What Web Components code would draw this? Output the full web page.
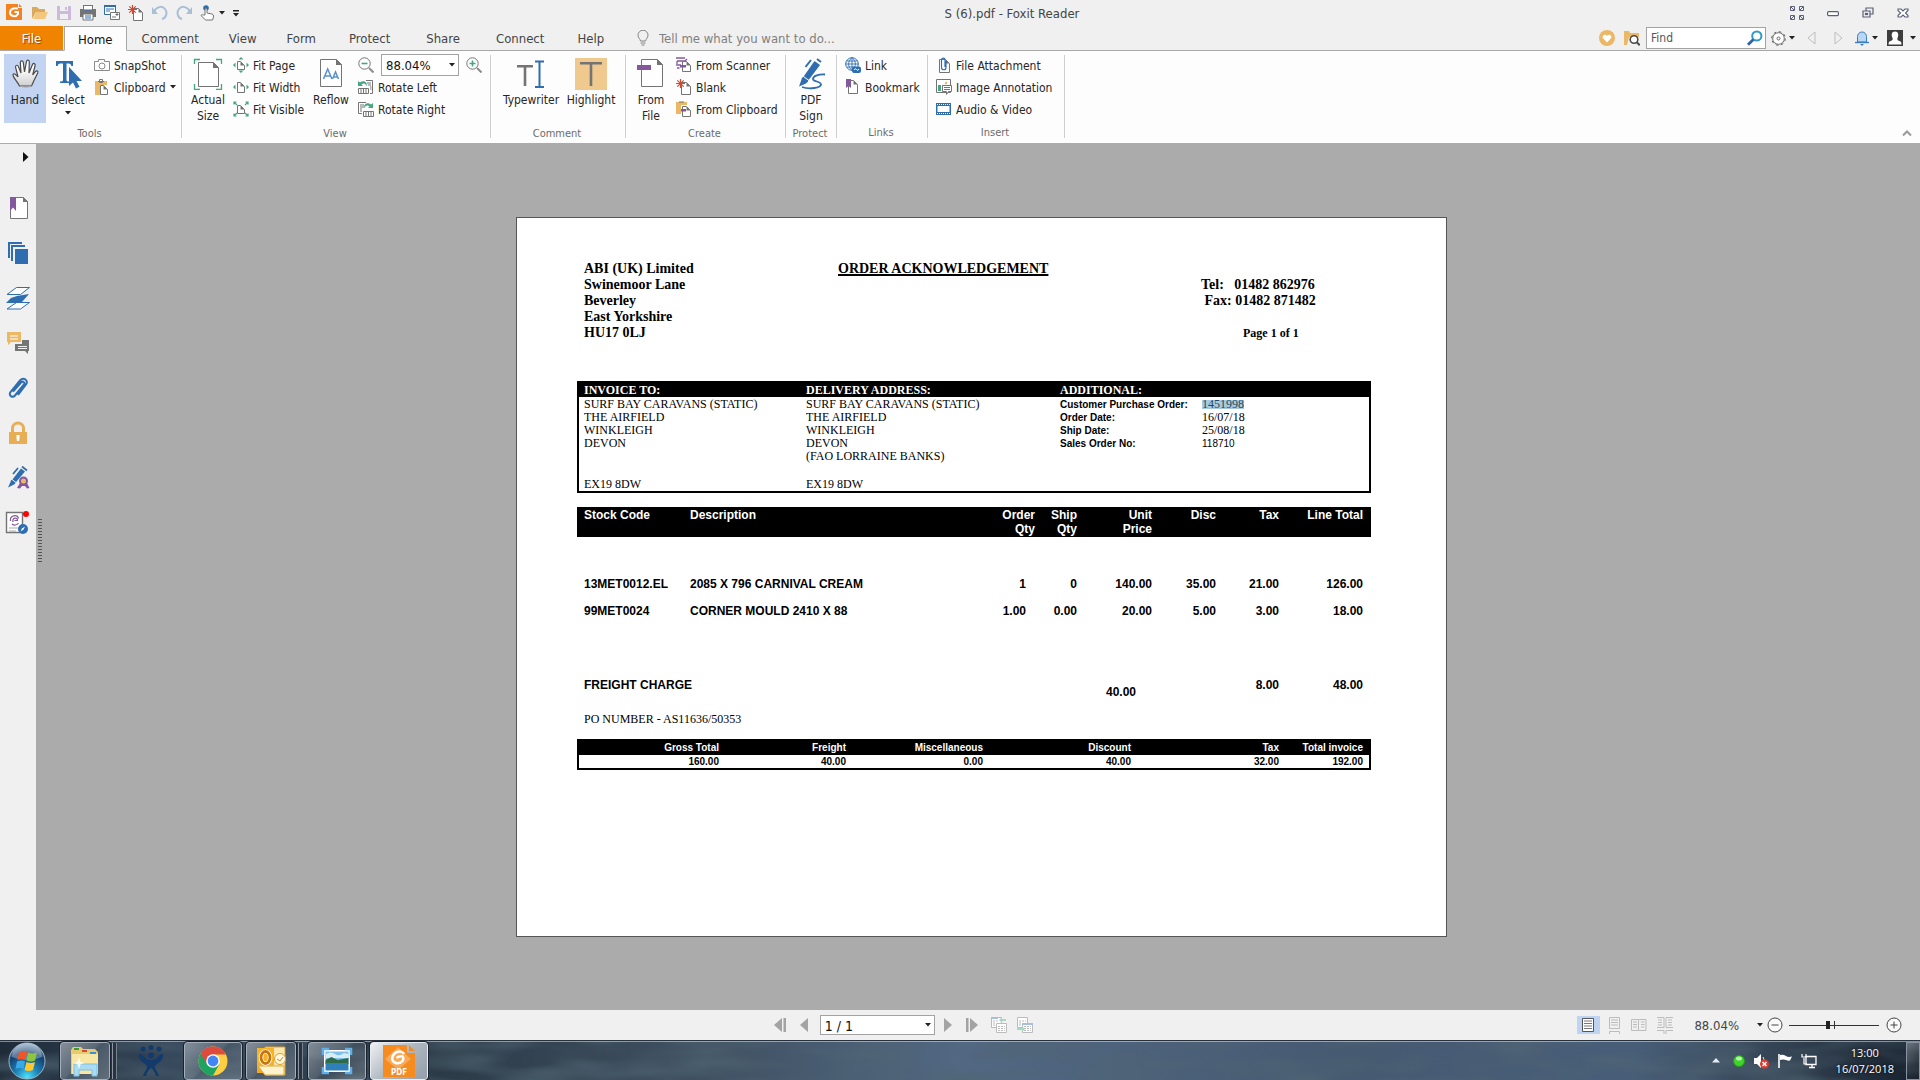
<!DOCTYPE html>
<html lang="en">
<head>
<meta charset="utf-8">
<title>S (6).pdf - Foxit Reader</title>
<style>
html,body{margin:0;height:100%}
body{font:12px/16px "DejaVu Sans Condensed","DejaVu Sans",sans-serif;color:#262626;background:#ababab;overflow:hidden}
</style>
</head>
<body>
<reader-app></reader-app>
<script>
const G='#747474',B='#2f6db1',P='#84589c',O='#ebb866',T='#45a681';
const page=(x,y,w,h,c=G,s=1)=>`<path d="M${x} ${y}h${w-4}l4 4v${h-4}h${-w}z" fill="#fff" stroke="${c}" stroke-width="${s}"/><path d="M${x+w-4} ${y}v4h4z" fill="${c}"/>`;
const ICONS={
logo:[18,18,`<path d="M0 0h12v4h4v12H0z" fill="#f58220"/><path d="M13 0l3 3h-3z" fill="#f58220"/><path d="M12 4.500c-5-1-8 1-8 4 0 4 6 5 8 1.500V8H8.500" fill="none" stroke="#fff" stroke-width="2"/>`],
open:[16,16,`<path d="M0 14V2h5l2 2h6v3H4z" fill="#dca95c"/><path d="M1 14L4 7h12l-3 7z" fill="#f3c77d"/>`],
save:[16,16,`<path d="M1 1h14v14H1z" fill="#cdb9dc"/><path d="M4 1h8v5H4zM4 9h8v5H4z" fill="#f0f0f0"/><path d="M9 2h2v3H9z" fill="#cdb9dc"/>`],
print:[16,16,`<path d="M3 0h10v4H3zM0 4h16v8H0z" fill="#747474"/><path d="M4 1h8v4H4z" fill="#fff"/><path d="M3 9h10v6H3z" fill="#fff" stroke="#747474"/><path d="M5 11h6M5 13h6" stroke="${B}"/><path d="M4 5h8" stroke="${B}"/>`],
mail:[16,16,`<path d="M.5.500h11v9H.5z" fill="#fff" stroke="${B}"/><path d="M0 0h12v2H0z" fill="${B}"/><path d="M2 4h8M2 6h4" stroke="${B}"/><path d="M6.500 7.500h9v7h-9z" fill="#fff" stroke="#747474"/><path d="M8 12h4M12 9h2v1h-2z" stroke="#747474"/>`],
newdoc:[16,16,page(5.5,3.5,9,12,G,1)+`<path d="M4.500 0v9M0 4.500h9M1.300 1.300l6.400 6.400M7.700 1.300L1.300 7.700" stroke="#d8452e" stroke-width="1.200"/>`],
undo:[16,16,`<path d="M2 7C4 2 10 0 13 4s1 9-3 10" fill="none" stroke="#a9bfd9" stroke-width="2"/><path d="M0 2v7h6z" fill="#a9bfd9"/>`],
redo:[16,16,`<path d="M14 7C12 2 6 0 3 4s-1 9 3 10" fill="none" stroke="#a9bfd9" stroke-width="2"/><path d="M16 2v7h-6z" fill="#a9bfd9"/>`],
touch:[16,16,`<circle cx="6" cy="3" r="2.800" fill="${B}"/><path d="M5 10V4q1-1.500 2 0v4l5 1q2 .5 1.500 3l-1 3H5.500L1 10.500q1-1.500 2.500-.5z" fill="#fff" stroke="#747474"/>`],
down:[6,4,`<path d="M0 0h6L3 3.500z" fill="#222"/>`],
qmore:[6,7,`<path d="M0 0h6v1.500H0zM0 3h6L3 6.500z" fill="#222"/>`],
full:[14,14,`<g fill="none" stroke="#5b5f78" stroke-width="1"><path d="M.5 4.500v-4h4v4zM9.500 4.500v-4h4v4zM.5 13.500v-4h4v4zM9.500 13.500v-4h4v4z"/><path d="M1 1l3 3M13 1l-3 3M1 13l3-3M13 13l-3-3"/></g>`],
min:[12,14,`<rect x=".6" y="5.600" width="10.800" height="4" rx="1" fill="#fff" stroke="#5b5f78" stroke-width="1.200"/>`],
restore:[12,14,`<g fill="#f0f0f0" stroke="#5b5f78" stroke-width="1.200"><path d="M4 2h7v6H4z"/><path d="M1 5h7v6H1z"/><path d="M3.500 7.500h2v1h-2z"/></g>`],
close:[12,14,`<path d="M1 3h3l2 2 2-2h3v1.500L8.500 7 11 9.500V11H8L6 9l-2 2H1V9.500L3.500 7 1 4.500z" fill="#fff" stroke="#5b5f78" stroke-width="1.100"/>`],
bulb:[12,16,`<path d="M3.500 11C3 8.500 1 8 1 5.200a5 5 0 0 1 10 0C11 8 9 8.500 8.500 11z" fill="none" stroke="#848484"/><path d="M3.500 13h5M4.500 15h3" stroke="#848484"/>`],
heart:[16,16,`<circle cx="8" cy="8" r="8" fill="${O}"/><path d="M8 12.500L4 8.300C2.500 6 5.500 3 8 5.800 10.500 3 13.500 6 12 8.300z" fill="#fff"/>`],
fsearch:[16,16,`<path d="M0 15V1h5l1 2h9v4H5l-2 8z" fill="${O}"/><circle cx="10" cy="9.500" r="3.800" fill="#fff" stroke="#4a4a4a" stroke-width="1.600"/><path d="M12.700 12.200l3 3" stroke="#4a4a4a" stroke-width="2"/>`],
find:[16,16,`<circle cx="9.800" cy="6" r="4.600" fill="#fff" stroke="#2f9ac4" stroke-width="2"/><path d="M6.300 9.500L1 14.700" stroke="#2f5fa8" stroke-width="2.800"/>`],
gear:[15,15,`<circle cx="7.500" cy="7.500" r="5.800" fill="#fff" stroke="#666" stroke-width="1"/><circle cx="7.500" cy="7.500" r="6.800" fill="none" stroke="#666" stroke-width="1" stroke-dasharray="2.700 2.640"/><circle cx="7.500" cy="7.500" r="1.500" fill="none" stroke="#666"/>`],
tl:[9,14,`<path d="M8 1v12L1 7z" fill="none" stroke="#bdbdbd"/>`],
tr:[9,14,`<path d="M1 1v12l7-6z" fill="none" stroke="#bdbdbd"/>`],
bell:[14,16,`<path d="M2.500 12V6.500a4.500 4.500 0 0 1 9 0V12z" fill="#b9d7f5" stroke="#3b7ec2"/><path d="M0 12.500h14" stroke="#3b7ec2" stroke-width="1.400"/><path d="M5 14h4l-2 2z" fill="#3b7ec2"/>`],
user:[20,16,`<path d="M0 0h16v16H0z" fill="#3d3d3d"/><path d="M8 1.500c3.500 0 4 3.500 2.500 6.500-.7 2 .5 2.500 3 3.500q1 .5 1 3H1.500q0-2.500 1-3c2.500-1 3.700-1.500 3-3.500C4 5 4.500 1.500 8 1.500z" fill="#fff"/>`],
up:[10,6,`<path d="M1 5.500L5 1.500l4 4" fill="none" stroke="#999" stroke-width="2"/>`],
hand:[32,32,`<path d="M10.500 28C8 23 3.500 19 4 16.500c1-1.800 3 0 5 2.500L6.500 9c0-2.200 2.300-2.400 3-.3L12 15 11.300 4.500c.2-2.200 2.700-2.200 3 0L15.500 14 17.500 3.500c.5-2 2.800-1.800 2.800.3L20 15l3.500-8.500c1-1.800 3-1 2.600 1L23.700 17l2.800-3.500c1.300-1.300 3-.3 2.200 1.500L25 22.500 22.500 28z" fill="url(#hg)" stroke="#4a4a4a" stroke-width="1.200"/><path d="M11 28c4 1.500 8 1.500 11.500 0" stroke="#aaa" fill="none"/><defs><linearGradient id="hg" x2="0" y2="1"><stop offset=".3" stop-color="#fff"/><stop offset="1" stop-color="#cfcfcf"/></linearGradient></defs>`],
select:[32,32,`<path d="M4 3h17v5h-1.500q-.5-2.500-2.500-2.500h-2.500V22q0 1.500 3 1.500V25H8v-1.500q3 0 3-1.500V5.500H8Q6 5.500 5.500 8H4z" fill="${B}"/><path d="M17 9v19l4-3.500 3 6 3.500-1.700-3-5.800H30z" fill="${B}"/>`],
camera:[16,16,`<path d="M.5 4.500h4v-2h6v2h5v9H.5z" fill="none" stroke="#8a8a8a"/><circle cx="8" cy="9" r="3" fill="none" stroke="#8a8a8a"/>`],
clip:[16,16,`<path d="M1 2h12v4H6v10H1z" fill="${O}"/><path d="M4 2.500h6M5.500.500h3v3h-3z" fill="#fff" stroke="${G}"/>${page(6.500,6.500,7,9)}`],
actual:[32,32,`<path d="M2.500 6V1.500H8M24 1.500h5.500V6M2.500 26v5.500H8M24 31.500h5.500V26" fill="none" stroke="${T}" stroke-width="1.300"/><path d="M6.500 4.500h15l5 5v19h-20z" fill="#fff" stroke="${G}"/><path d="M21 4v6h6z" fill="${G}"/>`],
fpage:[16,16,page(4.5,4.5,7,8)+`<path d="M8 0l2.500 2.500h-5zM8 16l2.500-2.500h-5zM0 8l2.500-2.500v5zM16 8l-2.500-2.500v5z" fill="${T}"/>`],
fwidth:[16,16,page(4.5,3.5,7,10)+`<path d="M0 8l2.500-2.500v5zM16 8l-2.500-2.500v5z" fill="${T}"/>`],
fvis:[16,16,page(4.5,4.5,7,8)+`<path d="M1 1l3 3M15 1l-3 3M1 15l3-3M15 15l-3-3M1 3.500V1h2.500M12.500 1H15v2.500M1 12.500V15h2.500M12.500 15H15v-2.500" fill="none" stroke="${T}" stroke-width="1.200"/>`],
reflow:[32,32,`<path d="M5.500 1.500h16l5 5v22h-21z" fill="#fff" stroke="${G}"/><path d="M21 1v6h6z" fill="${G}"/><path d="M8.500 21l4.200-10 4.200 10M10 18h5.500M17.500 21l3-7 3 7M18.500 19h4" fill="none" stroke="#5b91cc" stroke-width="1.500"/>`],
zout:[16,16,`<circle cx="6.500" cy="6.500" r="5.700" fill="#fff" stroke="${G}"/><path d="M3.500 6.500h6" stroke="${T}" stroke-width="1.600"/><path d="M11 11l4.500 4.500" stroke="#8c8c8c" stroke-width="2"/>`],
zin:[16,16,`<circle cx="6.500" cy="6.500" r="5.700" fill="#fff" stroke="${G}"/><path d="M3.500 6.500h6M6.500 3.500v6" stroke="${T}" stroke-width="1.600"/><path d="M11 11l4.500 4.500" stroke="#8c8c8c" stroke-width="2"/>`],
rotl:[16,16,`<path d="M8 1.500h6.500v13H12" fill="none" stroke="${G}"/><path d="M9 4h4M10 6h3M12 8h1.500M12 10h1.500" stroke="${G}"/><path d="M.5 9.500h10v5H.5zM3 10v4M5.500 10v4M8 10v4" fill="#fff" stroke="${G}"/><path d="M0 2v5h5L3.500 5.500C6 3.500 8 5 8.500 7.500 10 3 5.500.500 2 3.500z" fill="${T}"/>`],
rotr:[16,16,`<path d="M8 1.500H.5v11H4" fill="none" stroke="${G}"/><path d="M2 4h4M2 6h4M2 8h2M2 10h2" stroke="${G}"/><path d="M5.500 10.500h10v5h-10zM8 11v4M10.500 11v4M13 11v4" fill="#fff" stroke="${G}"/><path d="M15 2v5h-5l1.500-1.500C9 3.500 7 5 6.500 7.500 5 3 9.500.500 13 3.500z" fill="${T}"/>`],
typew:[32,32,`<path d="M2 7h16v2.500h-6.700V28H8.700V9.500H2z" fill="${G}"/><path d="M20 3.500h9M20 29h9M24.500 3.500V29" stroke="${B}" stroke-width="2" fill="none"/>`],
high:[32,32,`<path d="M0 0h32v32H0z" fill="#efc98e"/><path d="M5 4h22v2.500h-9.700V28h-2.600V6.500H5z" fill="${G}"/>`],
ffile:[32,32,`<path d="M6.500 1.500h16l5 5v22h-21z" fill="#fff" stroke="${G}"/><path d="M22 1v6h6z" fill="${G}"/><path d="M2 7h14v5H2z" fill="${P}"/>`],
fscan:[16,16,`<path d="M0 1h9M1 4h8l2-2M0 8h5M1 4v3M3.500 11H1" stroke="${P}" stroke-width="1.300" fill="none"/>${page(6.5,4.5,8,10)}<path d="M4 8h6v2.500H4z" fill="${P}"/>`],
fclip:[16,16,`<path d="M0 1h11v3H5v9H0z" fill="${O}"/><path d="M3 1h5" stroke="${G}"/>${page(6.5,5.5,8,10)}<path d="M5 8h5v2.500H5z" fill="${P}"/>`],
sign:[32,32,`<path d="M19.500 3l5.500 4L11 25.500l-7 3 2.500-7z" fill="${B}"/><path d="M16 2l-5.500 7M22 1l4 3M7 20l5.500 4" stroke="${B}" stroke-width="2"/><path d="M8.500 18.500l5.500 4" stroke="#fff"/><path d="M30 16.500c-6-.5-12 1.500-12 4.500s8 2 8 5.500-12 5-19 2.500" fill="none" stroke="${B}" stroke-width="1.800"/>`],
link:[16,16,`<circle cx="7" cy="7" r="6.300" fill="#fff" stroke="${B}"/><path d="M7 .5c-4.500 4-4.500 9 0 13M7 .5c4.500 4 4.500 9 0 13M.5 7h13M1.500 4h11M2 10h8M7 1v12" stroke="${B}" fill="none" stroke-width=".9"/><rect x="7" y="9.500" width="9" height="6.500" rx="2" fill="${B}"/><path d="M9 13q1-2.500 2.500-.5T14 12" stroke="#fff" fill="none"/>`],
bookm:[16,16,page(3.5,1.5,9,13)+`<path d="M1 0h5v9L3.500 7 1 9z" fill="${P}"/>`],
attach:[16,16,page(3.5,2.5,10,13)+`<path d="M10 4v6.500c0 3-4.500 3-4.500 0V3c0-2.500 3.500-2.500 3.500 0v7" fill="none" stroke="${B}" stroke-width="1.200"/>`],
imgann:[16,16,`<path d="M.5.500h14v13H.5z" fill="#fff" stroke="${G}"/><path d="M2 6h3v6H2z" fill="${T}"/><circle cx="10" cy="4" r="1.200" fill="${O}"/><path d="M6.500 6.500h9v6h-3l-2 3v-3h-4z" fill="#fff" stroke="${G}"/><path d="M8 8.500h6M8 10.500h6" stroke="${G}"/>`],
video:[16,16,`<path d="M0 2h15v12H0z" fill="${B}"/><path d="M1.500 5h12v6h-12z" fill="#fff"/><path d="M1 3.500h13M1 12.500h13" stroke="#fff" stroke-dasharray="1 1"/>`],
sarrow:[6,10,`<path d="M0 0v10l5.500-5z" fill="#111"/>`],
sbook:[24,24,`<path d="M4.500 1.500h13l4 4v17h-17z" fill="#fff" stroke="${G}"/><path d="M17 1v5h5z" fill="${G}"/><path d="M4 1h6v14l-3-3.500L4 15z" fill="${P}"/>`],
spages:[24,24,`<path d="M3 17V2h13" fill="none" stroke="${B}" stroke-width="2"/><path d="M6 20V5h13" fill="none" stroke="${B}" stroke-width="2"/><path d="M9 8h13v15H9z" fill="${B}"/>`],
slayers:[24,24,`<path d="M10.500 1.500h13l-9 7H1z" fill="#fff" stroke="${B}"/><path d="M10.500 16.500h13l-9 6.500H1z" fill="#fff" stroke="${B}"/><path d="M11 10l12-2-8 9H0l5-5z" fill="${B}"/>`],
scomm:[24,24,`<path d="M1 1h14v10H5l-3 3v-3H1z" fill="${O}"/><path d="M4 5h8M4 8h8" stroke="#fff" stroke-width="1.200"/><path d="M9 13h7V9h7v11h-1v3l-3-3H9z" fill="${G}"/><path d="M12 15.500h9M12 17.500h9" stroke="#f0f0f0"/>`],
sclip:[24,24,`<path d="M7 15.500l8-9c1.700-2 4.500 0 3 2L9 19.500c-2.500 3-7-.2-4.500-3.500L14 4.500c3.500-4 9 0 6 4L12 19" fill="none" stroke="${B}" stroke-width="2"/>`],
slock:[24,24,`<path d="M6.500 12V7.500a5.500 5.500 0 0 1 11 0V12" fill="none" stroke="#e8ae55" stroke-width="3"/><path d="M3 11h18v12H3z" fill="#e8ae55"/><path d="M10.500 14h3v3l-.5 3h-2l-.5-3z" fill="#fff"/>`],
ssign:[24,24,`<path d="M15 2.500l4 3L8 18.500l-6 3L4.500 16z" fill="${B}"/><path d="M12 2L7 8M16 .5l5 4M5 14.500l4 3" stroke="${B}" stroke-width="1.800"/><path d="M6 13.500l4 3" stroke="#f0f0f0"/><path d="M14 17l-3 5 3 .5 2-2.500h3l2 2.500 2.500-.5-2.500-5z" fill="${P}"/><circle cx="17.500" cy="15" r="3.500" fill="${O}" stroke="${P}" stroke-width="2"/>`],
scert:[26,24,`<path d="M1.500 1.500h16v20h-16z" fill="#fff" stroke="${G}" stroke-width="1.400"/><path d="M5.500 10c-1-6 7-7 8-2.500M8 11c-1-5 4.500-5 4.500-1.500h-3M7 13c2 2 5 1 6.500-1" fill="none" stroke="${P}" stroke-width="1.200"/><path d="M4 17h9M4 20h7" stroke="#aaa"/><circle cx="18" cy="18" r="5" fill="${B}"/><path d="M15.500 20.500l1.500-3 3-2-1.500 3z" fill="#fff"/><circle cx="21" cy="3" r="3" fill="#f00"/>`],
first:[13,14,`<path d="M8 0v14L0 7z" fill="#a3a3a3"/><path d="M9.500 0h2.500v14H9.500z" fill="#a3a3a3"/>`],
prev:[8,14,`<path d="M8 0v14L0 7z" fill="#a3a3a3"/>`],
next:[8,14,`<path d="M0 0v14l8-7z" fill="#a3a3a3"/>`],
last:[13,14,`<path d="M5 0v14l8-7z" fill="#a3a3a3"/><path d="M1 0h2.500v14H1z" fill="#a3a3a3"/>`],
vprev:[16,16,`<g fill="#fff" stroke="#bcbcbc"><path d="M.5.500h10v10H.5z"/><path d="M2 4h5M2 6h3M2 8h3" stroke-dasharray="2 1"/><path d="M5.500 6.500h10v9h-10z"/><path d="M7 9.500h7M7 11.500h7M7 13.500h7" stroke-dasharray="2 1"/></g><path d="M0 0h7v2H0z" fill="#a7bede"/><path d="M8 3l3-3v2h4v2h-4v2z" fill="#a9d6c5"/>`],
vnext:[16,16,`<g fill="#fff" stroke="#bcbcbc"><path d="M.5.500h10v10H.5z"/><path d="M2 4h7M2 6h3M2 8h3" stroke-dasharray="2 1"/><path d="M5.500 6.500h10v9h-10z"/><path d="M7 9.500h7M7 11.500h7M7 13.500h7" stroke-dasharray="2 1"/></g><path d="M5 6h11v2H5z" fill="#a7bede"/><path d="M8 12l-3-3v2H0v2h5v2z" fill="#a9d6c5"/>`],
v1:[23,18,`<path d="M0 0h23v18H0z" fill="#bfd3f2"/><path d="M5.500 2.500h11v13h-11z" fill="#fff" stroke="#555"/><path d="M7 5h8M7 7.500h8M7 10h8M7 12.500h8" stroke="#777"/>`],
v2:[12,18,`<g fill="none" stroke="#bcbcbc"><path d="M.5 1.500h10v11H.5zM.5 18v-2.500h10V18M2 4h7M2 6.500h7M2 9h7"/></g>`],
v3:[16,18,`<g fill="none" stroke="#bcbcbc"><path d="M.5 3.500h7v11h-7zM8 3.500h7v11H8M2 6h4M2 8.500h4M2 11h4M10 6h3.500M10 8.500h3.500M10 11h3.500"/></g>`],
v4:[16,18,`<g fill="none" stroke="#bcbcbc"><path d="M0 1.500h7v10H0M16 1.500H9v10h7M0 14.500h7V18M16 14.500H9V18M1 4h4M1 6.500h4M1 9h4M11 4h4M11 6.500h4M11 9h4"/></g>`],
minus:[16,16,`<circle cx="8" cy="8" r="7" fill="#fafafa" stroke="#444"/><path d="M4.500 8h7" stroke="#444"/>`],
plus:[16,16,`<circle cx="8" cy="8" r="7" fill="#fafafa" stroke="#444"/><path d="M4.500 8h7M8 4.500v7" stroke="#444"/>`],
orb:[38,38,`<defs><radialGradient id="o1" cx=".5" cy=".95" r=".9"><stop offset="0" stop-color="#4fe3ff"/><stop offset=".35" stop-color="#1e86b8"/><stop offset=".75" stop-color="#153f6e"/><stop offset="1" stop-color="#7f9db8"/></radialGradient></defs><circle cx="19" cy="19" r="18" fill="url(#o1)" stroke="#9ab4c8"/><path d="M4 15a15 14 0 0 1 30 0q-15 6-30 0z" fill="#fff" opacity=".3"/><path d="M11 10q4-2 8 0l-1.500 8q-4-2-8 0z" fill="#f0562a"/><path d="M20 10.500q4 2 9 0L27 18.500q-4 2-8.500 0z" fill="#8cc63f"/><path d="M9 19.500q4-2 8 0L15.500 27q-4-2-8 0z" fill="#38a9e8"/><path d="M18.500 20q4 2 8.500 0l-2 8q-4 2-8.500 0z" fill="#fdc82f"/>`],
explorer:[32,32,`<path d="M2 5l2-3h8l2 2h12l3 3v22H2z" fill="#e8cb6f"/><path d="M3 9h26v20H3z" fill="#f8e7a4"/><path d="M5 3h5v2H5z" fill="#3a9b3a"/><path d="M13 5h5v2h-5z" fill="#d24a32"/><path d="M21 7h6v2h-6z" fill="#3a8fd8"/><path d="M5 31V19h23v12h-5v-6H10v6z" fill="#a9dcf2" stroke="#7dbfdf"/><path d="M10 12l1.500 5 4 1-4 1.500L10 24l-1.500-4.500-4-1.500 4-1z" fill="#fff" opacity=".8"/>`],
jira:[32,32,`<g fill="#123a6b"><circle cx="8" cy="4" r="2.500"/><circle cx="16" cy="2.500" r="2.500"/><circle cx="24" cy="4" r="2.500"/><circle cx="16" cy="10.500" r="3"/><path d="M4 9c4-1 6 6 12 6s8-7 12-6c1 7-6 9-8 12-1 2 3 6 4 10h-3c-1-4-3-7-5-8-2 1-4 4-5 8H8c1-4 5-8 4-10-2-3-9-5-8-12z"/></g>`],
chrome:[32,32,`<circle cx="16" cy="16" r="14.500" fill="#ffcd41"/><path d="M16 16L3.500 8.700A14.500 14.500 0 0 0 16 30.500l6.500-11.500z" fill="#1da462"/><path d="M16 9.500h13A14.500 14.500 0 0 0 3.500 8.700L10 19z" fill="#dd4b3e"/><circle cx="16" cy="16" r="6.800" fill="#fff"/><circle cx="16" cy="16" r="5.400" fill="#4285f4"/>`],
outlook:[32,32,`<path d="M10 2h20v28H10z" fill="#fbe7ad" stroke="#d9a02c"/><path d="M2 4h16v24l-5 3-2-3H2z" fill="#f3a81d"/><path d="M3 21h26v9H10z" fill="#fff3cf" stroke="#dda93c"/><path d="M2 3h17v18H2z" fill="#f6b221"/><ellipse cx="10.500" cy="12.500" rx="4.500" ry="6" fill="none" stroke="#fff" stroke-width="4.500"/><ellipse cx="10.500" cy="12.500" rx="4.500" ry="6" fill="none" stroke="#c9740d" stroke-width="2.800"/><circle cx="25" cy="14" r="5.500" fill="#fff7e0" stroke="#d9a02c"/><path d="M22 14l3 2 3-4" fill="none" stroke="#c98a1c"/>`],
photo:[32,32,`<path d="M3 5h26v22H3z" fill="#fff"/><path d="M4.500 6.500h23V19h-23z" fill="#7fc0ec"/><path d="M5 9q5-3 9 0t9-1l4 1v4H5z" fill="#d8ecf8"/><path d="M4.500 15l6-3 6 3 11-2v6h-23z" fill="#2f6b46"/><path d="M4.500 18h23v7.500h-23z" fill="#2f7fb8"/><path d="M2 10V4h6M24 4h6v6M2 22v6h6M24 28h6v-6" fill="none" stroke="#5fb0e8" stroke-width="2.500"/>`],
foxit:[34,34,`<path d="M1 1h24v8h8v24H1z" fill="#f68b1f"/><path d="M27 1l6 6h-6z" fill="#f68b1f"/><path d="M16 3l13 12-13 11L3 15z" fill="#f9a95a"/><path d="M22 10c-1-2-4-3-7-2-4 1.500-6 6-4 9s7 3 9.500 0c1-1.500 1-4 0-4.500-2-.5-4 0-6 1.500" fill="none" stroke="#fff" stroke-width="2.600"/>`],
tarr:[8,5,`<path d="M4 0l4 4.500H0z" fill="#e6ecf4"/>`],
green:[12,12,`<circle cx="6" cy="6" r="5.500" fill="#3fd32b" stroke="#279a1c"/><ellipse cx="6" cy="3.500" rx="3" ry="2" fill="#b6f5a8"/>`],
speaker:[16,16,`<path d="M1 5h3l4-4v14l-4-4H1z" fill="#fff"/><path d="M10 4q3 4 0 8" stroke="#ddd" fill="none"/><circle cx="11.500" cy="11" r="4.500" fill="#e03a2c"/><path d="M9.500 9l4 4m0-4l-4 4" stroke="#fff" stroke-width="1.500"/>`],
flag:[16,16,`<path d="M2 1v14" stroke="#fff" stroke-width="1.600"/><path d="M3 2q3-1 6 1 2 1.500 6 .5l-2 4q-2 .5-4-.5-3-1-6 0z" fill="#fff"/>`],
net:[16,16,`<path d="M5 3.500h10v8H5zM8 14.500h6M11 12v2" fill="#3b4a5c" stroke="#fff" stroke-width="1.300"/><path d="M1 1v3h4V1M3 5v6h3" fill="none" stroke="#fff" stroke-width="1.200"/>`]
};
function define(name,css,html,setup){
  const t=document.createElement('template');
  t.innerHTML=`<style>*{box-sizing:border-box}button,input,select{font:inherit;color:inherit;margin:0}button{border:0;background:none;padding:0}${css}</style>${html}`;
  customElements.define(name,class extends HTMLElement{
    connectedCallback(){
      if(this.shadowRoot)return;
      const r=this.attachShadow({mode:'open'});
      r.append(t.content.cloneNode(true));
      if(setup)setup(r,this);
    }
  });
}
const icon=(n,c='')=>`<ui-icon class="${c}" name="${n}"></ui-icon>`;
define('ui-icon',':host{display:inline-flex;flex:none}svg{display:block}','',(r,h)=>{
  const [w,H,s]=ICONS[h.getAttribute('name')];
  r.innerHTML+=`<svg width="${w}" height="${H}" viewBox="0 0 ${w} ${H}" aria-hidden="true">${s}</svg>`;
});
define('icon-button',':host{display:inline-flex}button{display:flex;align-items:center;gap:3px}','<button></button>',(r,h)=>{
  const b=r.querySelector('button');
  b.setAttribute('aria-label',h.getAttribute('label'));
  b.innerHTML=icon(h.getAttribute('icon'))+(h.hasAttribute('menu')?icon('down'):'');
});

define('title-bar',`:host{display:flex;height:26px;align-items:center;background:#f0f0f0}
nav{display:flex;gap:8px;width:240px;padding-left:6px;align-items:center}h1{flex:1;text-align:center;font-size:13px;font-weight:400;margin:0;padding-top:2px;color:#444}
div{display:flex;width:136px;gap:23px;padding-left:6px;align-items:center}`,
`<nav><icon-button icon="logo" label="Foxit"></icon-button><icon-button icon="open" label="Open"></icon-button><icon-button icon="save" label="Save"></icon-button><icon-button icon="print" label="Print"></icon-button><icon-button icon="mail" label="Email"></icon-button><icon-button icon="newdoc" label="New"></icon-button><icon-button icon="undo" label="Undo"></icon-button><icon-button icon="redo" label="Redo"></icon-button><icon-button icon="touch" label="Touch mode" menu></icon-button><icon-button icon="qmore" label="Customize"></icon-button></nav>
<h1><slot></slot></h1>
<div><icon-button icon="full" label="Full screen"></icon-button><icon-button icon="min" label="Minimize"></icon-button><icon-button icon="restore" label="Restore"></icon-button><icon-button icon="close" label="Close"></icon-button></div>`);

define('ribbon-tab',`:host{display:flex;--pad:15px}:host([wide]){--pad:18px}
button{font-size:13px;padding:2px var(--pad) 0;color:#444;height:25px;border-bottom:1px solid #a8a8a8}
:host([kind=file]) button{width:63px;background:#f08300;color:#fff;text-shadow:1px 1px 1px #8a4a00}
:host([kind=active]){--pad:13px;margin-left:1px}
:host([kind=active]) button{background:#fdfdfd;border:1px solid #a8a8a8;border-bottom-color:#fdfdfd;color:#111}`,'<button role="tab"><slot></slot></button>');
define('ribbon-tabs',`:host{display:flex;height:25px;background:linear-gradient(#a8a8a8,#a8a8a8) 0 24px/100% 1px no-repeat #f0f0f0}
.tell{display:flex;align-items:center;gap:10px;padding-left:18px;flex:1;height:24px}
input{border:0;background:none;padding:0;outline:0}.tell input{width:240px;font-size:13px;padding-top:2px}input::placeholder{color:#808080;opacity:1}
.tools{display:flex;align-items:center;height:24px;padding-right:4px}
.tools>*{margin-right:9px}.tools .gap{margin-right:12px}.tools .near{margin-right:6px}
.tools .tri{margin-right:18px}.tools .tri2{margin-right:12px}.tools .end{margin:0}
.find{display:flex;align-items:center;width:120px;height:22px;border:1px solid #a3a3a3;background:#fff;padding:0 2px 0 4px;margin-right:5px}.find input{flex:1;width:60px}
.find ui-icon{margin-left:auto}.find input::placeholder{color:#555}`,
`<ribbon-tab kind="file">File</ribbon-tab><ribbon-tab kind="active">Home</ribbon-tab><ribbon-tab>Comment</ribbon-tab><ribbon-tab>View</ribbon-tab><ribbon-tab>Form</ribbon-tab><ribbon-tab wide>Protect</ribbon-tab><ribbon-tab wide>Share</ribbon-tab><ribbon-tab wide>Connect</ribbon-tab><ribbon-tab>Help</ribbon-tab>
<label class="tell"><ui-icon name="bulb"></ui-icon><input aria-label="Tell me" placeholder="Tell me what you want to do..."></label>
<div class="tools"><icon-button icon="heart" label="Favourite"></icon-button><icon-button class="near" icon="fsearch" label="Search folder"></icon-button>
<label class="find"><input aria-label="Find" placeholder="Find"><ui-icon name="find"></ui-icon></label>
<icon-button class="gap" icon="gear" label="Settings" menu></icon-button><icon-button class="tri" icon="tl" label="Previous"></icon-button><icon-button class="tri2" icon="tr" label="Next"></icon-button><icon-button icon="bell" label="Notices" menu></icon-button><icon-button class="end" icon="user" label="Account" menu></icon-button></div>`);

define('big-button',`:host{display:flex;width:42px}:host([mid]){width:44px}:host([wide]){width:64px}:host([semi]){width:56px}
button{width:100%;height:69px;padding-top:4px;display:flex;flex-direction:column;align-items:center;line-height:16px}
:host([on]) button{background:#c2d4f2}span{margin-top:2px}.arrow{margin-top:3px}`,
`<button><span><slot></slot></span></button>`,(r,h)=>{
  const b=r.querySelector('button');
  b.insertAdjacentHTML('afterbegin',icon(h.getAttribute('icon')));
  if(h.hasAttribute('menu'))b.insertAdjacentHTML('beforeend',icon('down','arrow'));
});
define('row-button',`:host{display:flex}button{display:flex;align-items:center;gap:4px;height:22px;white-space:nowrap}span{padding-top:2px}`,
`<button><span><slot></slot></span></button>`,(r,h)=>{
  const b=r.querySelector('button');
  b.insertAdjacentHTML('afterbegin',icon(h.getAttribute('icon')));
  if(h.hasAttribute('menu'))b.insertAdjacentHTML('beforeend',icon('down'));
});
define('drop-box',`:host{display:grid;width:78px;height:22px;border:1px solid #a3a3a3;background:#fff;align-items:center;font-size:13px;color:#111}
select{grid-area:1/1;appearance:none;border:0;background:none;padding:1px 0 0 4px;width:100%;outline:0}ui-icon{grid-area:1/1;justify-self:end;margin-right:3px;pointer-events:none}`,
`<select></select><ui-icon name="down"></ui-icon>`,(r,h)=>{
  const s=r.querySelector('select');s.setAttribute('aria-label',h.getAttribute('label'));s.add(new Option(h.getAttribute('value')));
});
define('ribbon-group',`:host{display:flex;flex-direction:column;flex:none;width:var(--w);background:linear-gradient(#cfcfcf,#cfcfcf) right 0 top 4px/1px 83px no-repeat}
.body{display:flex;padding:3px 0 0 var(--p,4px);height:72px}footer{text-align:center;font-size:11px;line-height:20px;padding:1px 3px 0 0;color:#6b6b6b}`,
`<div class="body"><slot></slot></div><footer></footer>`,(r,h)=>{r.querySelector('footer').textContent=h.getAttribute('label')});
define('ribbon-bar',`:host{display:flex;height:93px;background:#fdfdfd;border-bottom:1px solid #ababab}
.col{margin-left:4px}.fit{width:77px}.zoom{display:flex;gap:7px;align-items:center;height:22px}.far{margin-left:6px}.first{margin-left:0}
icon-button.up{margin:auto 8px 7px auto}`,
`<ribbon-group label="Tools" style="--w:182px"><big-button icon="hand" on>Hand</big-button><big-button icon="select" mid menu>Select</big-button><div class="col"><row-button icon="camera">SnapShot</row-button><row-button icon="clip" menu>Clipboard</row-button></div></ribbon-group>
<ribbon-group label="View" style="--w:309px;--p:5px"><big-button icon="actual">Actual Size</big-button><div class="col fit"><row-button icon="fpage">Fit Page</row-button><row-button icon="fwidth">Fit Width</row-button><row-button icon="fvis">Fit Visible</row-button></div><big-button icon="reflow">Reflow</big-button><div class="col far"><div class="zoom"><icon-button icon="zout" label="Zoom out"></icon-button><drop-box label="Zoom" value="88.04%"></drop-box><icon-button icon="zin" label="Zoom in"></icon-button></div><row-button icon="rotl">Rotate Left</row-button><row-button icon="rotr">Rotate Right</row-button></div></ribbon-group>
<ribbon-group label="Comment" style="--w:135px;--p:8px"><big-button icon="typew" wide>Typewriter</big-button><big-button icon="high" semi>Highlight</big-button></ribbon-group>
<ribbon-group label="Create" style="--w:160px"><big-button icon="ffile">From File</big-button><div class="col"><row-button icon="fscan">From Scanner</row-button><row-button icon="newdoc">Blank</row-button><row-button icon="fclip">From Clipboard</row-button></div></ribbon-group>
<ribbon-group label="Protect" style="--w:51px"><big-button icon="sign">PDF Sign</big-button></ribbon-group>
<ribbon-group label="Links" style="--w:91px;--p:8px"><div class="col first"><row-button icon="link">Link</row-button><row-button icon="bookm">Bookmark</row-button></div></ribbon-group>
<ribbon-group label="Insert" style="--w:137px;--p:8px"><div class="col first"><row-button icon="attach">File Attachment</row-button><row-button icon="imgann">Image Annotation</row-button><row-button icon="video">Audio &amp; Video</row-button></div></ribbon-group>
<icon-button class="up" icon="up" label="Collapse ribbon"></icon-button>`);

define('side-nav',`:host{display:flex;flex-direction:column;align-items:center;width:36px;background:#f0f0f0;gap:21px}
.arr{align-self:flex-end;margin:8px 7px 13px 0}`,
`<icon-button class="arr" icon="sarrow" label="Expand panel"></icon-button>`+[['sbook','Bookmarks'],['spages','Pages'],['slayers','Layers'],['scomm','Comments'],['sclip','Attachments'],['slock','Security'],['ssign','Signatures'],['scert','Certificates']].map(a=>`<icon-button icon="${a[0]}" label="${a[1]}"></icon-button>`).join(''));

define('order-info',`:host{display:grid;grid-template-columns:222px 254px 1fr;border:2px solid #000;font-size:12px;line-height:13px}
h3{background:#000;color:#fff;margin:0;font-size:12px;line-height:14px;padding-left:5px}
address,dl{font-style:normal;padding:1px 0 0 5px;margin:0}address div{min-height:13px}.gap{height:15px}
dl{display:grid;grid-template-columns:142px 1fr;align-content:start}dt{font:700 10px/13px "Liberation Sans",sans-serif}dd{margin:0}
mark{color:#27475c;background:linear-gradient(#a6cbe0,#a6cbe0) 0 3px/100% 9px no-repeat}.n{font:10px/13px "Liberation Sans",sans-serif}`,
`<h3>INVOICE TO:</h3><h3>DELIVERY ADDRESS:</h3><h3>ADDITIONAL:</h3>
<address><div>SURF BAY CARAVANS (STATIC)</div><div>THE AIRFIELD</div><div>WINKLEIGH</div><div>DEVON</div><div></div><div class="gap"></div><div>EX19 8DW</div></address>
<address><div>SURF BAY CARAVANS (STATIC)</div><div>THE AIRFIELD</div><div>WINKLEIGH</div><div>DEVON</div><div>(FAO LORRAINE BANKS)</div><div class="gap"></div><div>EX19 8DW</div></address>
<dl><dt>Customer Purchase Order:</dt><dd><mark>1451998</mark></dd><dt>Order Date:</dt><dd>16/07/18</dd><dt>Ship Date:</dt><dd>25/08/18</dd><dt>Sales Order No:</dt><dd class="n">118710</dd></dl>`);
const TBL=`:host{display:block}table{width:100%;border-collapse:collapse;table-layout:fixed;font-weight:700}td,th{text-align:right;vertical-align:top;padding:0;white-space:nowrap}thead{background:#000;color:#fff}td:last-child,th:last-child{padding-right:8px}`;
define('order-lines',TBL+`:host{font:12px/14px "Liberation Sans",sans-serif;margin-top:14px}
td:nth-child(-n+2),th:nth-child(-n+2){text-align:left}td:first-child,th:first-child{padding-left:7px}
thead th{padding-top:1px;padding-bottom:1px}td:nth-child(3){padding-right:9px}
.r1 td{padding-top:40px}.r2 td{padding-top:13px}.r3 td{padding-top:60px}.r3 .low{padding:67px 16px 0 0}`,
`<table><colgroup><col style="width:113px"><col><col style="width:65px"><col style="width:42px"><col style="width:75px"><col style="width:64px"><col style="width:63px"><col style="width:92px"></colgroup>
<thead><tr><th>Stock Code</th><th>Description</th><th>Order<br>Qty</th><th>Ship<br>Qty</th><th>Unit<br>Price</th><th>Disc</th><th>Tax</th><th>Line Total</th></tr></thead>
<tbody><tr class="r1"><td>13MET0012.EL</td><td>2085 X 796 CARNIVAL CREAM</td><td>1</td><td>0</td><td>140.00</td><td>35.00</td><td>21.00</td><td>126.00</td></tr>
<tr class="r2"><td>99MET0024</td><td>CORNER MOULD 2410 X 88</td><td>1.00</td><td>0.00</td><td>20.00</td><td>5.00</td><td>3.00</td><td>18.00</td></tr>
<tr class="r3"><td>FREIGHT CHARGE</td><td></td><td></td><td></td><td class="low">40.00</td><td></td><td>8.00</td><td>48.00</td></tr></tbody></table>`);
define('order-totals',TBL+`:host{font:10px/13px "Liberation Sans",sans-serif;border:2px solid #000;margin-top:13px}th{line-height:14px}td:last-child,th:last-child{padding-right:6px}`,
`<table><colgroup><col><col style="width:127px"><col style="width:137px"><col style="width:148px"><col style="width:148px"><col style="width:90px"></colgroup>
<thead><tr><th>Gross Total</th><th>Freight</th><th>Miscellaneous</th><th>Discount</th><th>Tax</th><th>Total invoice</th></tr></thead>
<tbody><tr><td>160.00</td><td>40.00</td><td>0.00</td><td>40.00</td><td>32.00</td><td>192.00</td></tr></tbody></table>`);
define('pdf-page',`:host{display:block;width:931px;min-height:720px;background:#fff;border:1px solid #555;padding:43px 75px 0 60px;font-family:"Liberation Serif",serif;color:#000}
header{display:grid;grid-template-columns:254px 363px 1fr;padding-left:7px;font-size:14px;line-height:16px;font-weight:700;margin-bottom:40px}
h2{font-size:14px;margin:0;text-decoration:underline;text-decoration-thickness:2px}.tel{padding-top:16px;white-space:pre}.pg{font-size:12px;margin-top:16px;padding-left:42px}
.po{font-size:12px;line-height:14px;margin:13px 0 0 7px}`,
`<header><div>ABI (UK) Limited<br>Swinemoor Lane<br>Beverley<br>East Yorkshire<br>HU17 0LJ</div><h2>ORDER ACKNOWLEDGEMENT</h2><div class="tel"><div>Tel:   01482 862976</div><div> Fax: 01482 871482</div><div class="pg">Page 1 of 1</div></div></header>
<order-info></order-info><order-lines></order-lines><p class="po">PO NUMBER - AS11636/50353</p><order-totals></order-totals>`);
define('doc-view',`:host{display:flex;flex:1;min-height:0}
.split{width:7px;display:grid;place-items:center;background:#ababab}
.split i{width:4px;height:44px;margin-top:-75px;background:radial-gradient(circle,#555 40%,transparent 45%) 0 0/2px 3px}
main{flex:1;display:flex;align-items:center;justify-content:center;background:#ababab}`,
`<side-nav></side-nav><div class="split"><i></i></div><main><pdf-page></pdf-page></main>`);

define('status-bar',`:host{display:flex;align-items:center;height:30px;background:#f0f0f0;color:#444}
.l{width:40.300%}.nav{display:flex;align-items:center;gap:13px;flex:1}.nav drop-box{width:115px;height:20px;font-size:14px;margin:0 -4px 0 -1px}.nav .v{margin-right:-3px}
.r{display:flex;align-items:center;padding-right:18px}.views{display:flex;gap:10px;align-items:center;margin-right:21px}.views .a{margin-right:-1px}
.z{font-size:13px;margin-right:18px;padding-top:2px}.s{margin:0 7px 0 6px}
input{appearance:none;width:90px;height:16px;background:linear-gradient(#333,#333) 0 8px/100% 1px no-repeat,linear-gradient(#333,#333) 45px 4px/1px 8px no-repeat;outline:0;display:block}
input::-webkit-slider-thumb{appearance:none;width:4px;height:8px;background:#222}.m{margin-left:4px}`,
`<div class="l"></div><div class="nav"><icon-button icon="first" label="First page"></icon-button><icon-button icon="prev" label="Previous page"></icon-button><drop-box label="Page" value="1 / 1"></drop-box><icon-button icon="next" label="Next page"></icon-button><icon-button icon="last" label="Last page"></icon-button><icon-button class="v" icon="vprev" label="Previous view"></icon-button><icon-button icon="vnext" label="Next view"></icon-button></div>
<div class="r"><div class="views"><icon-button class="a" icon="v1" label="Single page"></icon-button><icon-button icon="v2" label="Continuous"></icon-button><icon-button icon="v3" label="Facing"></icon-button><icon-button icon="v4" label="Continuous facing"></icon-button></div><span class="z">88.04%</span><icon-button icon="down" label="Zoom menu"></icon-button><icon-button class="m" icon="minus" label="Zoom out"></icon-button><input class="s" type="range" aria-label="Zoom" min="0" max="100" value="43"><icon-button icon="plus" label="Zoom in"></icon-button></div>`);

define('task-button',`:host{display:flex;width:50px;height:38px}:host([wide]){width:58px;margin-right:4px}:host([plain]){width:66px}:host([stack]){margin-right:8px;box-shadow:3px 0 0 -1px #28333f,4px 0 0 -1px #8c97a3,7px 0 0 -1px #28333f,8px 0 0 -1px #77828e}:host([stack]) button{background-color:#3c4c5d}
button{flex:1;display:grid;place-items:center;border:1px solid #a5afba;border-radius:3px;background:linear-gradient(135deg,#ffffff60,#ffffff28 45%,#ffffff12 50%,#ffffff30);outline:1px solid #1a232e}
:host([on]) button{background:linear-gradient(135deg,#eef1f4,#aeb7c0 50%,#949eaa);border-color:#e8ecf0}:host([plain]) button{border-color:transparent;background:none;outline:0}
ui-icon,span{grid-area:1/1}span{align-self:end;font:700 8px/9px "DejaVu Sans Condensed",sans-serif;color:#fff;margin-bottom:2px}`,
`<button></button>`,(r,h)=>{
  const b=r.querySelector('button');b.setAttribute('aria-label',h.getAttribute('label'));
  b.innerHTML=icon(h.getAttribute('icon'))+(h.hasAttribute('cap')?`<span>${h.getAttribute('cap')}</span>`:'');
});
define('task-bar',`:host{display:grid;height:40px}
.bg{grid-area:1/1;width:100%;height:40px;min-width:0;display:block}
.row{grid-area:1/1;display:flex;align-items:center;border-top:1px solid #28323e;box-shadow:inset 0 1px #ffffff70;min-width:0;padding-left:8px;position:relative}
.orb{margin-right:14px}.row task-button{margin-top:1px}.after{margin-left:4px}.tray{margin-left:auto;display:flex;align-items:center;gap:8px;height:39px;color:#fff}
.tray .a{margin-right:5px}time{font:11px/16px "Open Sans",sans-serif;text-align:center;margin:0 4px 0 11px;white-space:pre-line;text-shadow:0 0 3px #000}
.desk{width:14px;height:38px;border:1px solid #8793a0;background:linear-gradient(135deg,#ffffff50,#ffffff18 50%,#00000040)}`,
`<svg class="bg" preserveAspectRatio="none" viewBox="0 0 1920 40" aria-hidden="true"><defs>
<linearGradient id="a"><stop offset="0" stop-color="#1f2b38"/><stop offset=".1" stop-color="#34465a"/><stop offset=".22" stop-color="#2b3946"/><stop offset=".38" stop-color="#415364"/><stop offset=".5" stop-color="#526883"/><stop offset=".7" stop-color="#465a71"/><stop offset=".85" stop-color="#485e78"/><stop offset=".93" stop-color="#334252"/><stop offset="1" stop-color="#17212d"/></linearGradient>
<filter id="w" x="0" y="0" width="100%" height="100%"><feTurbulence type="fractalNoise" baseFrequency=".012 .05" numOctaves="2" seed="9"/><feColorMatrix values="0 0 0 0 .08  0 0 0 0 .13  0 0 0 0 .17  1.700 0 0 0 -.65"/></filter></defs>
<rect width="1920" height="40" fill="url(#a)"/><rect width="1920" height="40" filter="url(#w)"/></svg>
<div class="row"><icon-button class="orb" icon="orb" label="Start"></icon-button><task-button icon="explorer" label="Explorer" stack></task-button><task-button icon="jira" label="Jira" plain></task-button>
<task-button icon="chrome" label="Chrome" wide></task-button><task-button icon="outlook" label="Outlook" stack></task-button><task-button class="after" icon="photo" label="Photos" wide></task-button><task-button icon="foxit" label="Foxit Reader" cap="PDF" on wide></task-button>
<div class="tray"><ui-icon class="a" name="tarr"></ui-icon><ui-icon name="green"></ui-icon><ui-icon name="speaker"></ui-icon><ui-icon name="flag"></ui-icon><ui-icon name="net"></ui-icon><time>13:00
16/07/2018</time><button class="desk" aria-label="Show desktop"></button></div></div>`);
define('reader-app',':host{display:flex;flex-direction:column;height:100vh}',`<title-bar>S (6).pdf - Foxit Reader</title-bar><ribbon-tabs></ribbon-tabs><ribbon-bar></ribbon-bar><doc-view></doc-view><status-bar></status-bar><task-bar></task-bar>`);
</script>
</body>
</html>
